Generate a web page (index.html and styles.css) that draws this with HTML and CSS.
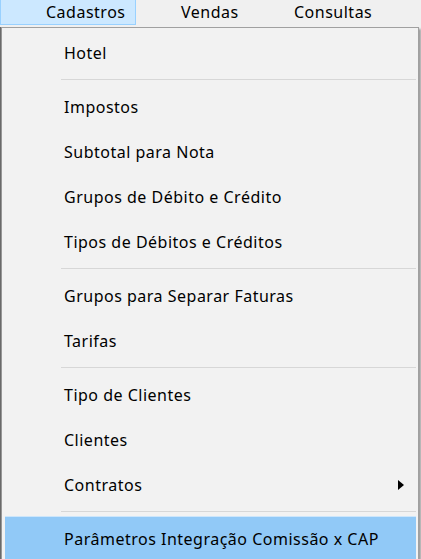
FILE: index.html
```html
<!DOCTYPE html>
<html lang="pt-BR">
<head>
    <meta charset="UTF-8">
    <meta name="viewport" content="width=device-width, initial-scale=1.0">
    <title>Cadastros</title>
    <link rel="stylesheet" href="styles.css">
</head>
<body>
    <div class="menubar">
        <div class="menubar-item active">Cadastros</div>
        <div class="menubar-item">Vendas</div>
        <div class="menubar-item">Consultas</div>
    </div>
    <div class="dropdown">
        <ul class="menu">
            <li class="menu-item">Hotel</li>
            <li class="separator"></li>
            <li class="menu-item">Impostos</li>
            <li class="menu-item">Subtotal para Nota</li>
            <li class="menu-item">Grupos de Débito e Crédito</li>
            <li class="menu-item">Tipos de Débitos e Créditos</li>
            <li class="separator"></li>
            <li class="menu-item">Grupos para Separar Faturas</li>
            <li class="menu-item">Tarifas</li>
            <li class="separator"></li>
            <li class="menu-item">Tipo de Clientes</li>
            <li class="menu-item">Clientes</li>
            <li class="menu-item has-sub">Contratos
                <svg class="arrow" width="6" height="10" viewBox="0 0 6 10"><path d="M0 0 L6 5 L0 10 Z" fill="#000"/></svg>
            </li>
            <li class="separator"></li>
            <li class="menu-item selected">Parâmetros Integração Comissão x CAP</li>
        </ul>
    </div>
</body>
</html>
```

FILE: styles.css
```css
body {
    margin: 0;
    background-color: #f0f0f0;
    font-family: "Noto Sans", "Open Sans", sans-serif;
    font-size: 16px;
    letter-spacing: 0.5px;
    color: #000;
    overflow: hidden;
}
.menubar {
    display: flex;
    height: 26px;
    background-color: #f0f0f0;
}
.menubar-item {
    display: flex;
    align-items: center;
    box-sizing: border-box;
    height: 25px;
    border: 1px solid transparent;
    border-top: none;
}
.menubar-item:nth-child(1) {
    width: 136px;
    padding-left: 45px;
}
.menubar-item:nth-child(2) {
    width: 157px;
    padding-left: 44px;
}
.menubar-item:nth-child(3) {
    padding-left: 0;
}
.menubar-item.active {
    background-color: #cce8ff;
    border-color: #99d1ff;
}
.dropdown {
    border-left: 1px solid #6a6a6a;
    margin-top: 1px;
}
.menu {
    list-style: none;
    margin: 0;
    padding: 2px 2px 0 0;
    width: 414px;
    border: 1px solid #a0a0a0;
    border-left-color: #979797;
    background-color: #f2f2f2;
    box-shadow: 2px 2px 2px rgba(0, 0, 0, 0.35);
}
.menu-item {
    position: relative;
    display: flex;
    align-items: center;
    height: 45px;
    padding-left: 59px;
    margin: 0 0 0 3px;
}
.separator {
    height: 1px;
    margin: 4px 0 4px 59px;
    background-color: #d7d7d7;
}
.has-sub .arrow {
    position: absolute;
    right: 12px;
    top: 18px;
}
.selected {
    background-color: #91c9f7;
    border-top: 1px solid #cde6fb;
    box-sizing: border-box;
}
```
